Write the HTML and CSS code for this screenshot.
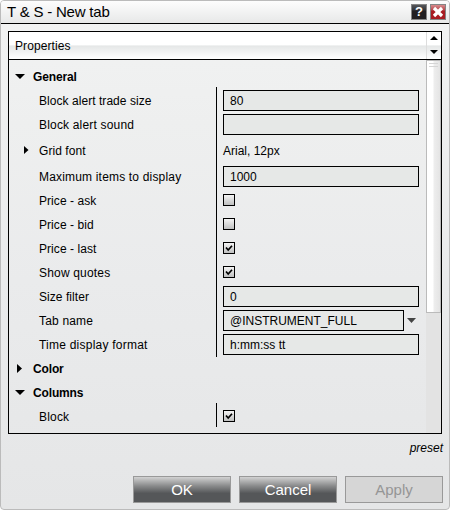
FILE: index.html
```html
<!DOCTYPE html>
<html lang="en">
<head>
<meta charset="utf-8">
<title>T &amp; S - New tab</title>
<link rel="stylesheet" href="styles.css">
</head>
<body>
<div class="dialog">
  <header class="titlebar">
    <h1 class="title">T &amp; S - New tab</h1>
    <button class="tool help" aria-label="Help">?</button>
    <button class="tool close" aria-label="Close"><svg width="14" height="14" viewBox="0 0 14 14"><path d="M3 3 11 11M11 3 3 11" stroke="#fff" stroke-width="3.2"/></svg></button>
  </header>
  <main class="panel">
    <div class="head"><span class="head-label">Properties</span>
      <div class="spin"><svg width="14" height="27" viewBox="0 0 14 27"><path d="M3 8 7 4 11 8ZM3 18 7 22 11 18Z" fill="#000"/></svg></div>
    </div>
    <div class="body">
      <div class="grid">
        <div class="section"><svg class="arrow" width="10" height="10" viewBox="0 0 10 10"><path d="M0 3H10L5 8Z"/></svg><b>General</b></div>
        <div class="group">
          <div class="row"><label class="snug">Block alert trade size</label><div class="field">80</div></div>
          <div class="row"><label class="wide">Block alert sound</label><div class="field"></div></div>
          <div class="row tall"><svg class="sub" width="5" height="8" viewBox="0 0 5 8"><path d="M0 0 4.500 4 0 8Z"/></svg><label>Grid font</label><span class="plain">Arial, 12px</span></div>
          <div class="row"><label class="wide">Maximum items to display</label><div class="field">1000</div></div>
          <div class="row"><label>Price - ask</label><i class="check"></i></div>
          <div class="row"><label>Price - bid</label><i class="check"></i></div>
          <div class="row"><label>Price - last</label><i class="check"><svg width="10" height="10" viewBox="0 0 10 10"><path d="M2 4.500 4.200 7 8 2.700" /></svg></i></div>
          <div class="row"><label class="wide">Show quotes</label><i class="check"><svg width="10" height="10" viewBox="0 0 10 10"><path d="M2 4.500 4.200 7 8 2.700" /></svg></i></div>
          <div class="row"><label>Size filter</label><div class="field">0</div></div>
          <div class="row"><label class="wide">Tab name</label><div class="field combo">@INSTRUMENT_FULL</div><svg class="drop" width="9" height="5" viewBox="0 0 9 5"><path d="M0 0H9L4.500 5Z"/></svg></div>
          <div class="row"><label class="wider">Time display format</label><div class="field">h:mm:ss tt</div></div>
        </div>
        <div class="section"><svg class="arrow" width="10" height="10" viewBox="0 0 10 10"><path d="M2 1V10L7 5.500Z"/></svg><b>Color</b></div>
        <div class="section"><svg class="arrow" width="10" height="10" viewBox="0 0 10 10"><path d="M0 3H10L5 8Z"/></svg><b>Columns</b></div>
        <div class="group last">
          <div class="row"><label class="wide">Block</label><i class="check"><svg width="10" height="10" viewBox="0 0 10 10"><path d="M2 4.500 4.200 7 8 2.700" /></svg></i></div>
        </div>
      </div>
      <div class="track"><div class="thumb"></div></div>
    </div>
  </main>
  <div class="preset">preset</div>
  <footer class="actions">
    <button class="btn">OK</button>
    <button class="btn">Cancel</button>
    <button class="btn off">Apply</button>
  </footer>
</div>
</body>
</html>
```
FILE: styles.css
```css
* { box-sizing: border-box; }
body { margin: 0; background: #fff; font: 12px "Liberation Sans", Arial, sans-serif; color: #000; }
.dialog { width: 450px; height: 510px; border: 1px solid #bbb; border-radius: 4px; background: linear-gradient(#f2f3f3 0, #eeefef 24%, #eaebec 55%, #e5e6e7 100%); overflow: hidden; }
.titlebar { height: 23px; display: flex; align-items: flex-start; padding: 3px 3px 0 6px; border-bottom: 1px solid #000; background: linear-gradient(#fdfdfd, #e7e8e8); }
.title { margin: -1px 0 0; flex: 1; font-size: 15px; font-weight: normal; line-height: 17px; letter-spacing: -0.2px; }
.tool { width: 16px; height: 16px; padding: 0; margin-left: 3px; border: 1px solid #858585; display: block; }
.tool svg { display: block; }
.help { background: linear-gradient(#55565a 0, #333438 35%, #211e20 45%); color: #fff; font: bold 13px/14px "Liberation Sans", Arial, sans-serif; }
.close { background: linear-gradient(#d68a8c 0, #b9484c 35%, #a81c22 45%); }
.panel { width: 434px; height: 403px; margin: 7px 0 0 7px; border: 1px solid #000; }
.head { height: 28px; display: flex; border-bottom: 1px solid #000; background: linear-gradient(#fff 0, #fff 47%, #e5e7e7 52%, #fff 100%); }
.head-label { flex: 1; padding-left: 6px; line-height: 28px; letter-spacing: 0.1px; }
.spin { width: 15px; border-left: 1px solid #ddd; }
.spin svg { display: block; }
.body { height: 373px; display: flex; }
.grid { width: 417px; padding-top: 4px; }
.section { height: 24px; display: flex; align-items: center; padding-left: 6px; }
.section b { margin-left: 8px; padding-top: 2px; letter-spacing: -0.15px; }
.group { position: relative; }
.group::before { content: ""; position: absolute; left: 207px; top: -1px; bottom: -1px; width: 1px; background: #000; }
.last::before { bottom: 1px; }
.row { height: 24px; display: flex; align-items: center; padding-left: 30px; position: relative; }
.row label { width: 184px; white-space: nowrap; padding-top: 1px; letter-spacing: 0.06px; }
.row .snug { letter-spacing: 0.05px; }
.row .wide { letter-spacing: 0.18px; }
.row .wider { letter-spacing: 0.23px; }
.tall { height: 28px; }
.sub { position: absolute; left: 15px; top: 10px; }
.plain { padding-top: 1px; }
.field { width: 196px; height: 21px; border: 1px solid #000; background: #e6e8e7; padding-left: 6px; line-height: 20px; margin-top: 1px; }
.combo { width: 181px; }
.drop { margin-left: 3px; fill: #444; }
.check { width: 12px; height: 12px; border: 1px solid #000; background: linear-gradient(#f4f4f4, #bfc0c0); }
.check svg { display: block; }
.check path { fill: none; stroke: #000; stroke-width: 1.7; }
.track { width: 15px; background: #e3e3e3; }
.thumb { height: 253px; border: 1px solid #bbb; background: linear-gradient(#d5d5d5, #d5d5d5) 2px 2px / 9px 1px no-repeat, linear-gradient(#d5d5d5, #d5d5d5) 2px 5px / 9px 1px no-repeat, linear-gradient(90deg, #fff 0, #fff 6px, #eee 7px, #e4e4e4 13px); }
.preset { text-align: right; font-style: italic; padding-right: 6px; margin-top: 7px; height: 15px; line-height: 15px; }
.actions { display: flex; gap: 8px; justify-content: flex-end; padding: 20px 6px 0 0; }
.btn { width: 98px; height: 27px; padding: 0; border: 1px solid #999; background: linear-gradient(#d2d2d2 0, #8b8c8d 35%, #555759 65%, #555759 100%); color: #fff; font: 15px "Liberation Sans", Arial, sans-serif; }
.off { background: #d6d6d6; color: #959595; }
```
